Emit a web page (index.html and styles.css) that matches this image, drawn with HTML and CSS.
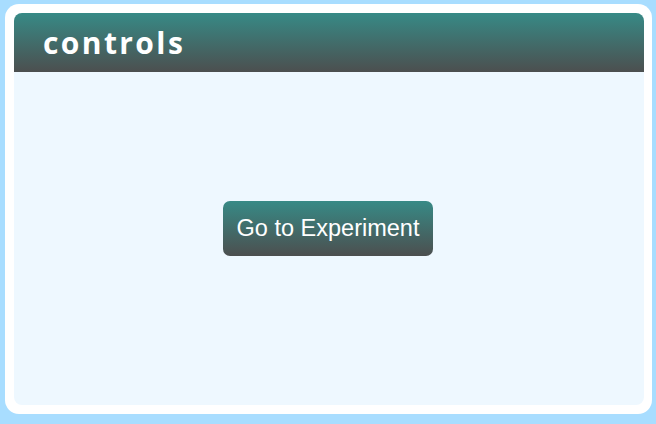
FILE: index.html
```html
<!DOCTYPE html>
<html>
<head>
<meta charset="utf-8">
<link rel="stylesheet" href="styles.css">
</head>
<body>
<div class="card">
  <div class="panel">
    <div class="header"><h1 class="title">controls</h1></div>
    <div class="content">
      <button class="btn">Go to Experiment</button>
    </div>
  </div>
</div>
</body>
</html>
```
FILE: styles.css
```css
html, body {
  margin: 0;
  padding: 0;
  background: #a8ddff;
}
body {
  padding: 4px 4px 10px 5px;
  box-sizing: border-box;
  height: 424px;
}
.card {
  background: #ffffff;
  border-radius: 14px;
  padding: 9px 8px 9px 9px;
  height: 410px;
  box-sizing: border-box;
}
.panel {
  background: #eef8ff;
  border-radius: 8px;
  height: 100%;
  display: flex;
  flex-direction: column;
  overflow: hidden;
}
.header {
  height: 59px;
  background: linear-gradient(to bottom, #378a86, #4c4f4f);
  display: flex;
  align-items: center;
  padding-left: 29px;
  flex: none;
}
.title {
  margin: 0;
  color: #ffffff;
  font-family: "Open Sans", sans-serif;
  font-weight: 700;
  font-size: 30px;
  letter-spacing: 2.4px;
  line-height: 1;
}
.content {
  flex: 1;
  display: flex;
  align-items: center;
  justify-content: center;
  padding-bottom: 20px;
}
.btn {
  width: 210px;
  height: 55px;
  border: none;
  border-radius: 7px;
  background: linear-gradient(to bottom, #378a86, #4c4f4f);
  color: #ffffff;
  font-family: "Liberation Sans", Arial, sans-serif;
  font-size: 23.5px;
  padding: 0;
  margin-right: 2px;
}
```
